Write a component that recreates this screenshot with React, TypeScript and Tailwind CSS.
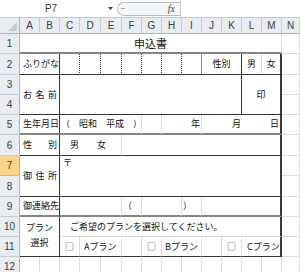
import React from 'react';

const GR = 'border-r border-r-[#dadcdd]';
const GB = 'border-b border-b-[#dadcdd]';
const DR = 'border-r border-r-[#333]';
const DB = 'border-b border-b-[#333]';
const TB = 'border-b-2 border-b-[#858585]';
const R2 = 'border-r-2 border-r-[#3a3a3a]';
const DOT = 'border-r border-r-[#333] [border-right-style:dotted]';
const GRAYR = 'border-r border-r-[#8a8a8a]';

type CellProps = { c?: string; r?: string; b?: string; children?: React.ReactNode };

const Cell = ({ c = '', r = GR, b = GB, children }: CellProps) => (
  <div className={`${r} ${b} ${c} flex items-center whitespace-nowrap text-[9px] text-[#111]`}>{children}</div>
);

const RowHdr = ({ n, sel = false }: { n: number; sel?: boolean }) => (
  <div
    className={`${
      sel ? 'bg-[#f9d58b] border-b-[#e6b45a]' : 'bg-[#e9edf2] border-b-[#c9ced6]'
    } border-r border-r-[#a9b1bc] border-b flex items-center justify-center text-[10px] text-[#3c3c3c] font-['Liberation_Sans',sans-serif]`}
  >
    {n}
  </div>
);

const ColHdr = ({ l }: { l: string }) => (
  <div className="bg-[#e9edf2] border-r border-r-[#c9ced6] border-b border-b-[#a9b1bc] flex items-center justify-center text-[10px] text-[#3c3c3c] font-['Liberation_Sans',sans-serif]">
    {l}
  </div>
);

const letters = ['A', 'B', 'C', 'D', 'E', 'F', 'G', 'H', 'I', 'J', 'K', 'L', 'M', 'N'];

export default function App() {
  return (
    <div className="w-[300px] h-[272px] overflow-hidden bg-white font-['Noto_Sans_CJK_JP',sans-serif]">
      {/* formula bar */}
      <div className="h-[18px] flex items-center bg-white border-b border-b-[#c3c8cf]">
        <div className="w-[117px] h-full flex items-center text-[10px] text-[#333] font-['Liberation_Sans',sans-serif]">
          <span className="w-[102px] text-center">P7</span>
          <svg className="ml-[6px]" width="5" height="3" viewBox="0 0 5 3">
            <path d="M0 0H5L2.5 3Z" fill="#444" />
          </svg>
        </div>
        <div className="w-[63px] h-[14px] flex items-center justify-between border border-r-0 border-[#b5bcc6] rounded-l-[7px] bg-[#f4f6f8] pl-[3px] pr-[5px]">
          <span className="w-[4px] h-px bg-[#9aa2ad]" />
          <span className="text-[10px] italic text-[#444] font-['Liberation_Serif',serif]">fx</span>
        </div>
        <div className="flex-1 h-full border-l border-l-[#c3c8cf] bg-white" />
      </div>

      {/* sheet */}
      <div className="grid grid-cols-[20px_20px_20px_20px_21px_21px_20px_20px_20px_20px_20px_20px_20px_20px_18px] grid-rows-[16px_20px_21px_20px_20px_20px_21px_20px_21px_20px_20px_20px_20px]">
        {/* column headers */}
        <div className="bg-[#e9edf2] border-r border-r-[#a9b1bc] border-b border-b-[#a9b1bc] relative">
          <svg className="absolute right-[2px] bottom-[2px]" width="9" height="9" viewBox="0 0 9 9">
            <path d="M9 0V9H0Z" fill="#c6ccd4" />
          </svg>
        </div>
        {letters.map((l) => (
          <ColHdr key={l} l={l} />
        ))}

        {/* row 1 */}
        <RowHdr n={1} />
        <Cell c="col-span-13 justify-center text-[11px]" b={TB}>
          申込書
        </Cell>
        <Cell />

        {/* row 2 */}
        <RowHdr n={2} />
        <Cell c="col-span-2 pl-[3px]" r={DR} b={DB}>
          ふりがな
        </Cell>
        <Cell r={DOT} b={DB} />
        <Cell r={DOT} b={DB} />
        <Cell r={DOT} b={DB} />
        <Cell r={DOT} b={DB} />
        <Cell r={DOT} b={DB} />
        <Cell r={DOT} b={DB} />
        <Cell r={GRAYR} b={DB} />
        <Cell c="col-span-2 justify-center" r={DR} b={DB}>
          性別
        </Cell>
        <Cell c="justify-center" r={GR} b={DB}>
          男
        </Cell>
        <Cell c="justify-center" r={R2} b={DB}>
          女
        </Cell>
        <Cell />

        {/* rows 3-4 */}
        <RowHdr n={3} />
        <Cell c="col-span-2 row-span-2 justify-between pl-[3px] pr-[2px]" r={DR} b={DB}>
          <span>お</span>
          <span>名</span>
          <span>前</span>
        </Cell>
        <Cell c="col-span-9 row-span-2" r={DR} b={DB} />
        <Cell c="col-span-2 row-span-2 justify-center" r={R2} b={DB}>
          印
        </Cell>
        <Cell />
        <RowHdr n={4} />
        <Cell />

        {/* row 5 */}
        <RowHdr n={5} />
        <Cell c="col-span-2 pl-[3px]" r={DR} b={TB}>
          生年月日
        </Cell>
        <Cell c="col-span-4 pl-[1px]" r={GR} b={TB}>
          （　昭和　平成　）
        </Cell>
        <Cell r={GR} b={TB} />
        <Cell c="col-span-2 justify-end pr-[1px]" r={GR} b={TB}>
          年
        </Cell>
        <Cell c="col-span-2 justify-end pr-[1px]" r="" b={TB}>
          月
        </Cell>
        <Cell c="col-span-2 justify-end pr-[1px]" r={R2} b={TB}>
          日
        </Cell>
        <Cell />

        {/* row 6 */}
        <RowHdr n={6} />
        <Cell c="col-span-2 justify-between pl-[3px] pr-[2px]" r={DR} b={DB}>
          <span>性</span>
          <span>別</span>
        </Cell>
        <Cell c="col-span-3 gap-[18px] pl-[10px]" r={GR} b={DB}>
          <span>男</span>
          <span>女</span>
        </Cell>
        <Cell c="col-span-8" r={R2} b={DB} />
        <Cell />

        {/* rows 7-8 */}
        <RowHdr n={7} sel />
        <Cell c="col-span-2 row-span-2 justify-between pl-[3px] pr-[2px]" r={DR} b={DB}>
          <span>御</span>
          <span>住</span>
          <span>所</span>
        </Cell>
        <Cell c="col-span-11 row-span-2 items-start pl-[3px] pt-[1px] leading-[12px]" r={R2} b={DB}>
          〒
        </Cell>
        <Cell />
        <RowHdr n={8} />
        <Cell />

        {/* row 9 */}
        <RowHdr n={9} />
        <Cell c="col-span-2 pl-[3px]" r={DR} b={TB}>
          御連絡先
        </Cell>
        <Cell c="col-span-3" r={GR} b={TB} />
        <Cell c="pl-[1px]" r={GR} b={TB}>
          （
        </Cell>
        <Cell c="col-span-2" r={GR} b={TB} />
        <Cell c="pl-[1px]" r={GR} b={TB}>
          ）
        </Cell>
        <Cell c="col-span-4" r={R2} b={TB} />
        <Cell />

        {/* rows 10-11 */}
        <RowHdr n={10} />
        <Cell c="col-span-2 row-span-2 flex-col justify-center leading-[15px] pb-[3px]" r={DR} b={DB}>
          <span>プラン</span>
          <span>選択</span>
        </Cell>
        <Cell c="col-span-11 pl-[10px]" r={R2} b={GB}>
          ご希望のプランを選択してください。
        </Cell>
        <Cell />
        <RowHdr n={11} />
        <Cell c="justify-center text-[7px]" r={GR} b={DB}>
          □
        </Cell>
        <Cell c="col-span-2 pl-[4px]" r={GR} b={DB}>
          Aプラン
        </Cell>
        <Cell r={GR} b={DB} />
        <Cell c="justify-center text-[7px]" r={GR} b={DB}>
          □
        </Cell>
        <Cell c="col-span-2 pl-[3px]" r={GR} b={DB}>
          Bプラン
        </Cell>
        <Cell r={GR} b={DB} />
        <Cell c="justify-center text-[7px]" r={GR} b={DB}>
          □
        </Cell>
        <Cell c="col-span-2 pl-[5px]" r={R2} b={DB}>
          Cプラン
        </Cell>
        <Cell />

        {/* row 12 */}
        <RowHdr n={12} />
        {letters.map((l) => (
          <Cell key={l} />
        ))}
      </div>
    </div>
  );
}
